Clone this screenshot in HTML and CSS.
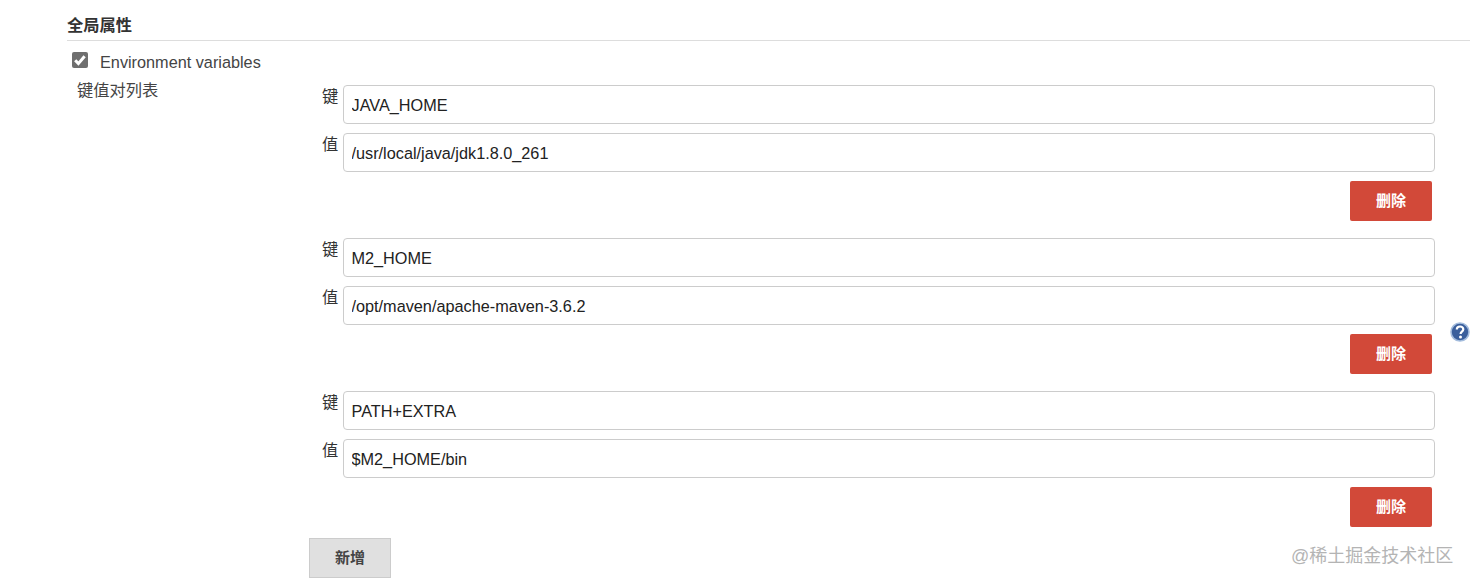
FILE: index.html
```html
<!DOCTYPE html>
<html lang="zh-CN">
<head>
  <meta charset="UTF-8">
  <meta name="viewport" content="width=device-width, initial-scale=1.0">
  <title>全局属性</title>
  <link rel="stylesheet" href="styles.css">
</head>
<body>

  <div class="section-head">全局属性</div>

  <label class="check-row">
    <span class="check-box">
      <svg viewBox="0 0 16 16" width="16" height="16"><path d="M3.2 8.2l3.2 3.4 6.2-7.4" fill="none" stroke="#fff" stroke-width="3"/></svg>
    </span>
    <span class="check-text">Environment variables</span>
  </label>

  <div class="form-row">
    <div class="form-label">键值对列表</div>

    <div class="entries">
      <div class="entry">
        <div class="field"><span class="field-name">键</span><input class="field-input" type="text" value="JAVA_HOME"></div>
        <div class="field"><span class="field-name">值</span><input class="field-input" type="text" value="/usr/local/java/jdk1.8.0_261"></div>
        <div class="entry-actions"><button class="btn-delete">删除</button></div>
      </div>
      <div class="entry">
        <div class="field"><span class="field-name">键</span><input class="field-input" type="text" value="M2_HOME"></div>
        <div class="field"><span class="field-name">值</span><input class="field-input" type="text" value="/opt/maven/apache-maven-3.6.2"></div>
        <div class="entry-actions"><button class="btn-delete">删除</button></div>
      </div>
      <div class="entry">
        <div class="field"><span class="field-name">键</span><input class="field-input" type="text" value="PATH+EXTRA"></div>
        <div class="field"><span class="field-name">值</span><input class="field-input" type="text" value="$M2_HOME/bin"></div>
        <div class="entry-actions"><button class="btn-delete">删除</button></div>
      </div>
      <button class="btn-add">新增</button>
    </div>

    <div class="help">
      <svg viewBox="0 0 20 20" width="20" height="20">
        <circle cx="10" cy="10" r="9" fill="#3a5f9c" stroke="#a3bcdd" stroke-width="1.6"/>
        <path d="M6.8 7.6c0-2 1.5-3.1 3.3-3.1s3.2 1 3.2 2.8c0 2.4-2.7 2.4-2.7 4.6" fill="none" stroke="#fff" stroke-width="2.2"/>
        <circle cx="10.5" cy="15" r="1.5" fill="#fff"/>
      </svg>
    </div>
  </div>

  <div class="watermark">@稀土掘金技术社区</div>

</body>
</html>
```

FILE: styles.css
```css
html, body {
  margin: 0;
  padding: 0;
  height: 584px;
  overflow: hidden;
  background-color: #fff;
  color: #333;
  font-family: "Liberation Sans", "Noto Sans CJK SC", sans-serif;
  font-size: 16.25px;
}

.section-head {
  margin-left: 67px;
  height: 40px;
  line-height: 50px;
  border-bottom: 1px solid #ddd;
  font-weight: bold;
  color: #333;
}

.check-row {
  display: flex;
  align-items: center;
  height: 20px;
  margin: 9px 0 0 72px;
}

.check-box {
  display: block;
  width: 16px;
  height: 16px;
  border-radius: 2px;
  background-color: #6f6f6f;
}

.check-box svg {
  display: block;
}

.check-text {
  margin-left: 12px;
  padding-top: 4px;
  color: #444;
}

.form-row {
  display: flex;
  margin-top: 9px;
}

.form-label {
  width: 233px;
  margin-left: 77px;
  line-height: 22px;
  color: #444;
}

.entries {
  width: 1126px;
  padding-top: 6px;
}

.entry {
  height: 153px;
}

/* last entry sits closer to the add button */
.entry:nth-last-child(2) {
  height: 147px;
}

.field {
  display: flex;
  margin-bottom: 9px;
}

.field-name {
  width: 34px;
  padding-left: 13px;
  box-sizing: border-box;
  line-height: 22px;
  color: #333;
}

.field-input {
  width: 1092px;
  height: 39px;
  box-sizing: border-box;
  padding: 2px 7.5px 0;
  border: 1px solid #ccc;
  border-radius: 4px;
  background-color: #fff;
  color: #222;
  font-family: inherit;
  font-size: 16.25px;
}

.entry-actions {
  display: flex;
  justify-content: flex-end;
  padding-right: 3px;
}

.btn-delete {
  width: 82px;
  height: 40px;
  padding: 0 0 3px;
  border: none;
  border-radius: 2px;
  background-color: #d24939;
  color: #fff;
  font-family: inherit;
  font-size: 15px;
  font-weight: bold;
}

.btn-add {
  display: block;
  width: 82px;
  height: 40px;
  padding: 0 0 3px;
  border: 1px solid #ccc;
  background-color: #e0e0e0;
  color: #444;
  font-family: inherit;
  font-size: 15px;
  font-weight: bold;
}

.help {
  margin: 243px 0 0 15px;
}

.help svg {
  display: block;
}

.watermark {
  position: absolute;
  left: 1291px;
  top: 544px;
  font-size: 18px;
  line-height: 24px;
  color: #b4b4b4;
}
```
